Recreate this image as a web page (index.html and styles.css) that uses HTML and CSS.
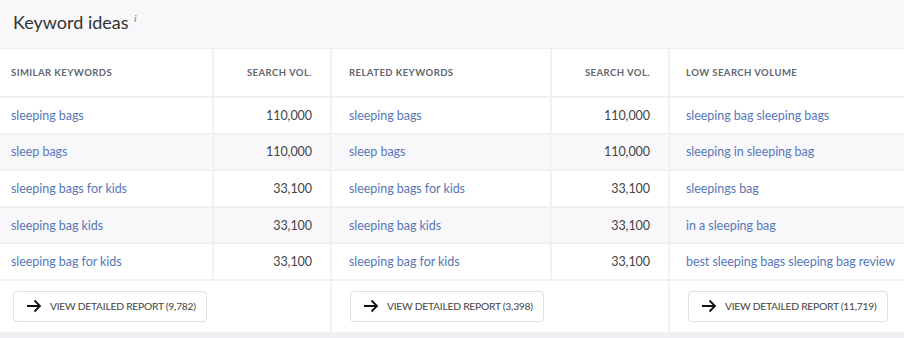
FILE: index.html
```html
<!DOCTYPE html>
<html lang="en">
<head>
  <meta charset="UTF-8" />
  <title>Keyword ideas</title>
  <link rel="stylesheet" href="styles.css">
</head>
<body>
  <header class="panel-head">
    <h1>Keyword ideas <sup>i</sup></h1>
  </header>

  <div class="ideas">
    <div class="cell th first">Similar keywords</div>
    <div class="cell th num">Search vol.</div>
    <div class="cell th">Related keywords</div>
    <div class="cell th num">Search vol.</div>
    <div class="cell th last">Low search volume</div>

    <a class="cell kw first" href="#">sleeping bags</a>
    <div class="cell num">110,000</div>
    <a class="cell kw" href="#">sleeping bags</a>
    <div class="cell num">110,000</div>
    <a class="cell kw last" href="#">sleeping bag sleeping bags</a>

    <a class="cell kw first alt" href="#">sleep bags</a>
    <div class="cell num alt">110,000</div>
    <a class="cell kw alt" href="#">sleep bags</a>
    <div class="cell num alt">110,000</div>
    <a class="cell kw last alt" href="#">sleeping in sleeping bag</a>

    <a class="cell kw first" href="#">sleeping bags for kids</a>
    <div class="cell num">33,100</div>
    <a class="cell kw" href="#">sleeping bags for kids</a>
    <div class="cell num">33,100</div>
    <a class="cell kw last" href="#">sleepings bag</a>

    <a class="cell kw first alt" href="#">sleeping bag kids</a>
    <div class="cell num alt">33,100</div>
    <a class="cell kw alt" href="#">sleeping bag kids</a>
    <div class="cell num alt">33,100</div>
    <a class="cell kw last alt" href="#">in a sleeping bag</a>

    <a class="cell kw first" href="#">sleeping bag for kids</a>
    <div class="cell num">33,100</div>
    <a class="cell kw" href="#">sleeping bag for kids</a>
    <div class="cell num">33,100</div>
    <a class="cell kw last" href="#">best sleeping bags sleeping bag review</a>

    <div class="foot span2 foot-first">
      <button class="report-btn">
        <svg width="16" height="16" viewBox="0 0 16 16"><path d="M1 8h13M8.5 2.5L14 8l-5.5 5.5" fill="none" stroke="#111" stroke-width="1.8"/></svg>
        View detailed report (9,782)
      </button>
    </div>
    <div class="foot span2">
      <button class="report-btn">
        <svg width="16" height="16" viewBox="0 0 16 16"><path d="M1 8h13M8.5 2.5L14 8l-5.5 5.5" fill="none" stroke="#111" stroke-width="1.8"/></svg>
        View detailed report (3,398)
      </button>
    </div>
    <div class="foot">
      <button class="report-btn">
        <svg width="16" height="16" viewBox="0 0 16 16"><path d="M1 8h13M8.5 2.5L14 8l-5.5 5.5" fill="none" stroke="#111" stroke-width="1.8"/></svg>
        View detailed report (11,719)
      </button>
    </div>
  </div>
</body>
</html>
```

FILE: styles.css
```css
* {
  margin: 0;
  padding: 0;
  box-sizing: border-box;
}

body {
  font-family: 'Lato', 'Liberation Sans', sans-serif;
  background: #eff0f3;
  width: 904px;
  height: 338px;
  overflow: hidden;
}

.panel-head {
  background: #f8f8fb;
  height: 49px;
  border-bottom: 1px solid #eeeff3;
  padding: 6px 13px 0;
}

.panel-head h1 {
  font-size: 18px;
  font-weight: 400;
  color: #333;
  line-height: 24px;
}

.panel-head sup {
  font-size: 10px;
  font-style: italic;
  color: #777;
  vertical-align: 7px;
  margin-left: 1px;
}

.ideas {
  display: grid;
  grid-template-columns: 212px 116px 218px 116px 1fr;
  grid-template-rows: 47px repeat(5, 34.6px) 51px;
  gap: 2px;
  background: #f0f1f4;
}

.cell {
  background: #fff;
  display: flex;
  align-items: center;
  padding: 0 18px 0 17px;
  font-size: 12.5px;
  letter-spacing: -0.05px;
  color: #444;
  text-decoration: none;
  white-space: nowrap;
}

.cell.first {
  padding-left: 11px;
}

.cell.last {
  padding-left: 16px;
  padding-right: 0;
}

.cell.alt {
  background: #f8f8fb;
}

.th {
  font-size: 9.5px;
  font-weight: 700;
  text-transform: uppercase;
  letter-spacing: 0.45px;
  color: #62666f;
}

.num {
  justify-content: flex-end;
}

.kw {
  color: #5877b6;
}

.span2 {
  grid-column: span 2;
}

.foot {
  background: #fff;
  padding: 10px 0 0 18px;
}

.foot.foot-first {
  padding-left: 13px;
}

.report-btn {
  display: flex;
  align-items: center;
  gap: 8px;
  height: 31px;
  padding: 0 10px 0 12px;
  background: #fff;
  border: 1px solid #dfe0e4;
  border-radius: 4px;
  font-family: inherit;
  font-size: 10.3px;
  text-transform: uppercase;
  letter-spacing: -0.25px;
  color: #444;
  cursor: pointer;
}
```
